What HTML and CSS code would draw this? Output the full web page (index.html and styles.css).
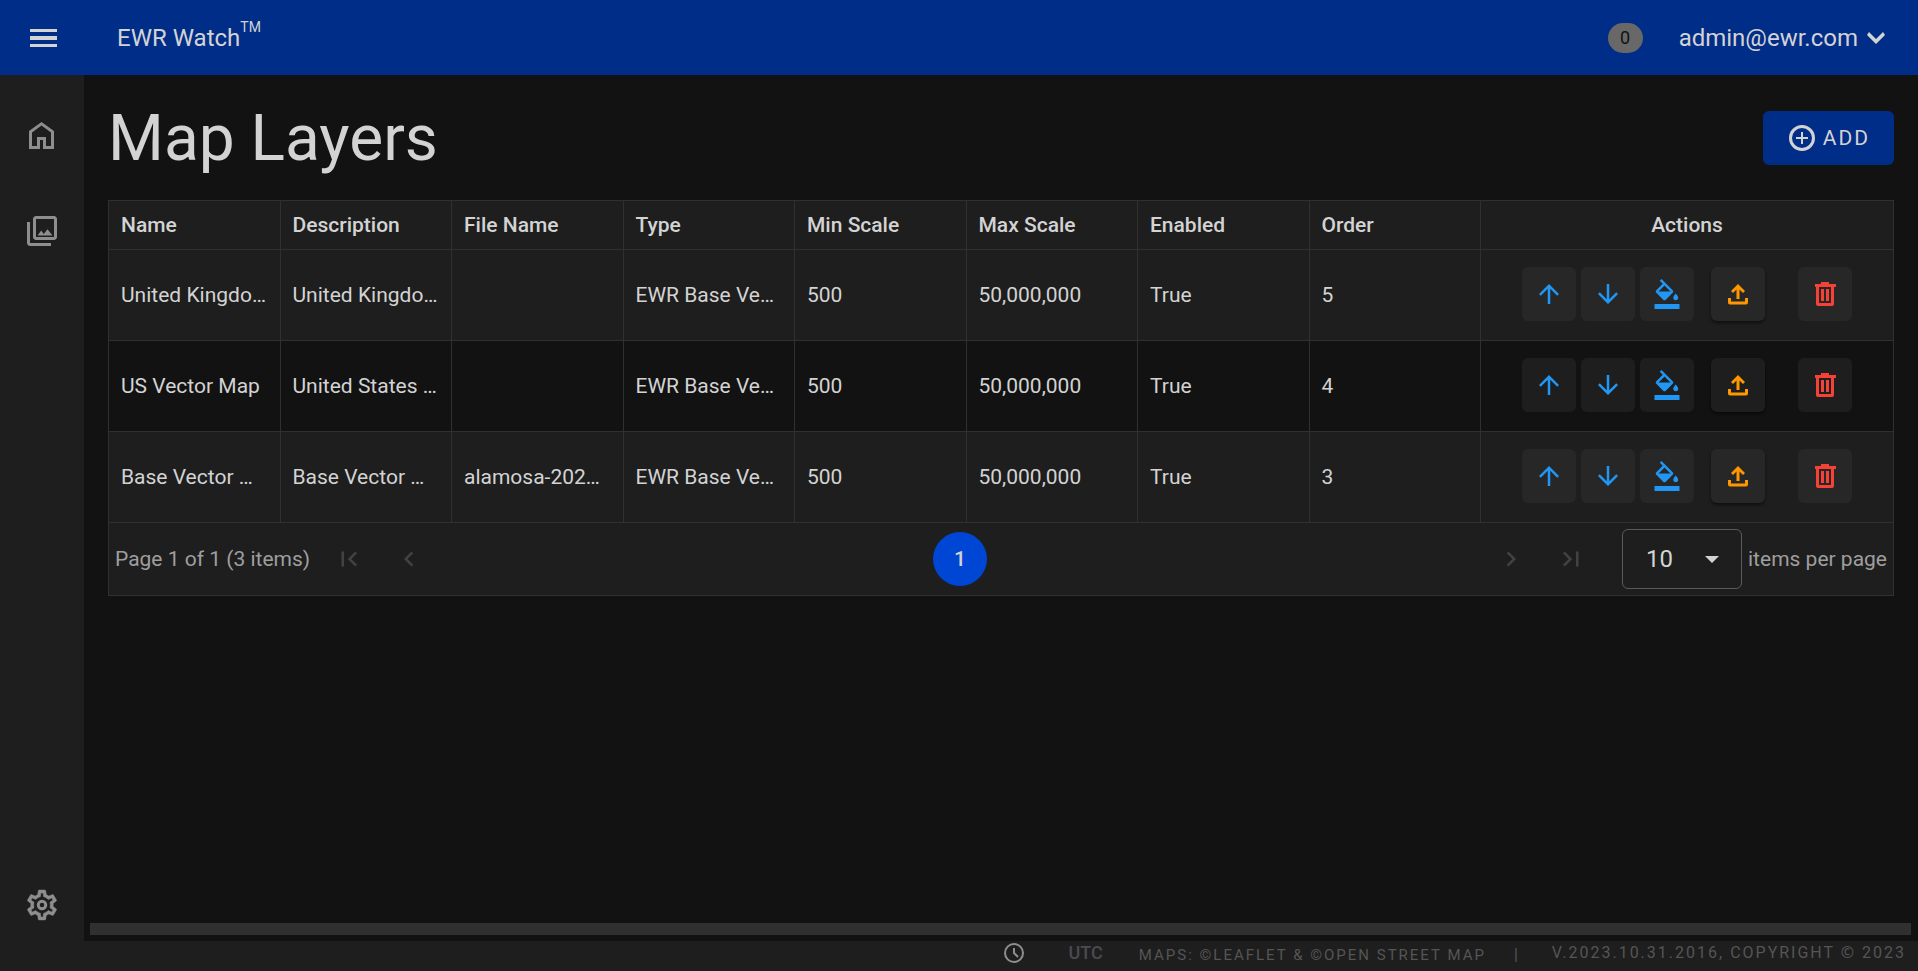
FILE: index.html
```html
<!DOCTYPE html>
<html lang="en">
<head>
    <meta charset="UTF-8">
    <meta name="viewport" content="width=device-width, initial-scale=1.0">
    <title>EWR Watch - Map Layers</title>
    <link rel="stylesheet" href="styles.css">
</head>
<body>
    <svg class="sprite" aria-hidden="true">
        <symbol id="i-up" viewBox="0 0 24 24"><path d="M4 12l1.41 1.41L11 7.83V20h2V7.83l5.58 5.59L20 12l-8-8-8 8z"/></symbol>
        <symbol id="i-down" viewBox="0 0 24 24"><path d="M20 12l-1.41-1.41L13 16.17V4h-2v12.17l-5.58-5.59L4 12l8 8 8-8z"/></symbol>
        <symbol id="i-fill" viewBox="0 0 24 24"><path d="M16.56 8.94L7.62 0 6.21 1.41l2.38 2.38-5.15 5.15c-.59.59-.59 1.54 0 2.12l5.5 5.5c.29.29.68.44 1.06.44s.77-.15 1.06-.44l5.5-5.5c.59-.58.59-1.53 0-2.12zM5.21 10L10 5.21 14.79 10H5.21zM19 11.5s-2 2.17-2 3.5c0 1.1.9 2 2 2s2-.9 2-2c0-1.33-2-3.5-2-3.5zM2 20h20v4H2v-4z"/></symbol>
        <symbol id="i-upload" viewBox="0 0 30 30"><path d="M15 5l7 7-2 2-3.500-3.500V20h-3v-9.500L10 14l-2-2zM5 19h3v3.500h14V19h3v4.500a2 2 0 0 1-2 2H7a2 2 0 0 1-2-2z"/></symbol>
        <symbol id="i-trash" viewBox="0 0 21 24"><path fill-rule="evenodd" d="M6 2V0h8v2h7v3h-2v17a2 2 0 0 1-2 2H3a2 2 0 0 1-2-2V5H0V2zM4 5v16h12V5zM6 7h3v12H6zM11 7h3v12h-3z"/></symbol>
        <symbol id="i-chev" viewBox="0 0 24 24"><path d="M10 6L8.590 7.410 13.170 12l-4.580 4.590L10 18l6-6z"/></symbol>
        <symbol id="i-last" viewBox="0 0 24 24"><path d="M5.590 7.410L10.180 12l-4.590 4.590L7 18l6-6-6-6zM16 6h2v12h-2z"/></symbol>
    </svg>

    <header class="topbar">
        <button class="plain menu" aria-label="Menu">
            <svg viewBox="0 0 27 18"><path d="M0 0h27v3H0zM0 7h27v4H0zM0 15h27v3H0z"/></svg>
        </button>
        <a class="brand" href="#">EWR Watch<sup>TM</sup></a>
        <span class="count">0</span>
        <button class="plain account">
            admin@ewr.com
            <svg viewBox="0 0 18 12"><path d="M2 0l7 7 7-7 2 3-9 9-9-9z"/></svg>
        </button>
    </header>

    <nav class="sidebar">
        <a href="#" aria-label="Home">
            <svg viewBox="-5 -5 36 36"><path fill-rule="evenodd" d="M12.500 0L25 9v18H14v-9h-3v9H0V9zM12.500 3.500L3 10.500V24h5v-9h9v9h5V10.500z"/></svg>
        </a>
        <a href="#" aria-label="Map layers">
            <svg viewBox="0 0 24 24"><path d="M20 4v12H8V4h12m0-2H8c-1.100 0-2 .9-2 2v12c0 1.100.9 2 2 2h12c1.100 0 2-.9 2-2V4c0-1.100-.9-2-2-2zm-8.500 9.670l1.690 2.260 2.480-3.100L19 15H9zM2 6v14c0 1.100.9 2 2 2h14v-2H4V6H2z"/></svg>
        </a>
        <a class="settings" href="#" aria-label="Settings">
            <svg viewBox="0 0 24 24"><path stroke="currentColor" stroke-width=".3" d="M19.430 12.980c.04-.32.07-.64.07-.98 0-.34-.03-.66-.07-.98l2.110-1.650c.19-.15.24-.42.12-.64l-2-3.460c-.09-.16-.26-.25-.44-.25-.06 0-.12.010-.17.030l-2.490 1c-.52-.4-1.080-.73-1.690-.98l-.38-2.650C14.460 2.180 14.250 2 14 2h-4c-.25 0-.46.18-.49.42l-.38 2.650c-.61.25-1.170.59-1.690.98l-2.490-1c-.06-.02-.12-.03-.18-.03-.17 0-.34.09-.43.25l-2 3.460c-.13.22-.07.49.12.64l2.110 1.650c-.04.32-.07.65-.07.98 0 .33.030.66.070.98l-2.110 1.650c-.19.15-.24.42-.12.64l2 3.460c.09.16.26.25.44.25.06 0 .12-.01.17-.03l2.490-1c.52.4 1.080.73 1.690.98l.38 2.650c.03.24.24.42.49.42h4c.25 0 .46-.18.49-.42l.38-2.650c.61-.25 1.170-.59 1.690-.98l2.490 1c.06.020.12.030.18.030.17 0 .34-.09.43-.25l2-3.460c.12-.22.07-.49-.12-.64l-2.110-1.650zm-1.980-1.710c.04.31.05.52.05.73 0 .21-.02.43-.05.73l-.14 1.130.89.7 1.080.84-.7 1.210-1.270-.51-1.040-.42-.9.68c-.43.32-.84.56-1.250.73l-1.060.43-.16 1.130-.2 1.350h-1.400l-.19-1.350-.16-1.130-1.060-.43c-.43-.18-.83-.41-1.230-.71l-.91-.7-1.060.43-1.270.51-.7-1.210 1.080-.84.89-.7-.14-1.130c-.03-.31-.05-.54-.05-.74s.02-.43.05-.73l.14-1.130-.89-.7-1.080-.84.7-1.210 1.270.51 1.040.42.9-.68c.43-.32.84-.56 1.250-.73l1.060-.43.16-1.130.2-1.350h1.390l.19 1.350.16 1.130 1.060.43c.43.18.83.41 1.230.71l.91.7 1.060-.43 1.270-.51.7 1.210-1.070.85-.89.7.14 1.130z"/><circle cx="12" cy="12" r="2.500" fill="none" stroke="currentColor" stroke-width="2"/></svg>
        </a>
    </nav>

    <main class="content">
        <div class="page-head">
            <h1>Map Layers</h1>
            <button class="add">
                <svg viewBox="0 0 26 26"><circle cx="13" cy="13" r="11.500" fill="none" stroke="currentColor" stroke-width="3"/><path d="M12 7h2v5h5v2h-5v5h-2v-5H7v-2h5z"/></svg>
                ADD
            </button>
        </div>

        <div class="grid">
            <table>
                <colgroup><col span="8"><col class="col-actions"></colgroup>
                <thead>
                    <tr><th>Name</th><th>Description</th><th>File Name</th><th>Type</th><th>Min Scale</th><th>Max Scale</th><th>Enabled</th><th>Order</th><th class="center">Actions</th></tr>
                </thead>
                <tbody>
                    <tr>
                        <td>United Kingdom Map</td><td>United Kingdom Map</td><td></td><td>EWR Base Vector</td><td>500</td><td>50,000,000</td><td>True</td><td>5</td>
                        <td class="cell-actions">
                            <div class="actions">
                                <button class="act" aria-label="Move up"><svg><use href="#i-up"/></svg></button>
                                <button class="act" aria-label="Move down"><svg><use href="#i-down"/></svg></button>
                                <button class="act fill" aria-label="Style"><svg><use href="#i-fill"/></svg></button>
                                <button class="act upload" aria-label="Upload"><svg><use href="#i-upload"/></svg></button>
                                <button class="act delete" aria-label="Delete"><svg><use href="#i-trash"/></svg></button>
                            </div>
                        </td>
                    </tr>
                    <tr>
                        <td>US Vector Map</td><td>United States Map</td><td></td><td>EWR Base Vector</td><td>500</td><td>50,000,000</td><td>True</td><td>4</td>
                        <td class="cell-actions">
                            <div class="actions">
                                <button class="act" aria-label="Move up"><svg><use href="#i-up"/></svg></button>
                                <button class="act" aria-label="Move down"><svg><use href="#i-down"/></svg></button>
                                <button class="act fill" aria-label="Style"><svg><use href="#i-fill"/></svg></button>
                                <button class="act upload" aria-label="Upload"><svg><use href="#i-upload"/></svg></button>
                                <button class="act delete" aria-label="Delete"><svg><use href="#i-trash"/></svg></button>
                            </div>
                        </td>
                    </tr>
                    <tr>
                        <td>Base Vector Map</td><td>Base Vector Map</td><td>alamosa-2023.map</td><td>EWR Base Vector</td><td>500</td><td>50,000,000</td><td>True</td><td>3</td>
                        <td class="cell-actions">
                            <div class="actions">
                                <button class="act" aria-label="Move up"><svg><use href="#i-up"/></svg></button>
                                <button class="act" aria-label="Move down"><svg><use href="#i-down"/></svg></button>
                                <button class="act fill" aria-label="Style"><svg><use href="#i-fill"/></svg></button>
                                <button class="act upload" aria-label="Upload"><svg><use href="#i-upload"/></svg></button>
                                <button class="act delete" aria-label="Delete"><svg><use href="#i-trash"/></svg></button>
                            </div>
                        </td>
                    </tr>
                </tbody>
            </table>

            <div class="pager">
                <span class="info">Page 1 of 1 (3 items)</span>
                <button class="plain nav flip" disabled aria-label="First page"><svg><use href="#i-last"/></svg></button>
                <button class="plain nav flip" disabled aria-label="Previous page"><svg><use href="#i-chev"/></svg></button>
                <div class="numbers"><button class="page">1</button></div>
                <button class="plain nav" disabled aria-label="Next page"><svg><use href="#i-chev"/></svg></button>
                <button class="plain nav" disabled aria-label="Last page"><svg><use href="#i-last"/></svg></button>
                <div class="select">
                    <select id="size"><option>10</option><option>20</option><option>50</option></select>
                    <svg viewBox="0 0 14 7"><path d="M0 0h14L7 7z"/></svg>
                </div>
                <label for="size">items per page</label>
            </div>
        </div>

        <div class="scroller"></div>
    </main>

    <footer class="footer">
        <svg viewBox="0 0 22 22"><g fill="none" stroke="currentColor" stroke-width="2"><circle cx="11" cy="11" r="9"/><path d="M11 6v5l4 4"/></g></svg>
        <span class="utc">UTC</span>
        <span class="maps">Maps: <a href="#">©Leaflet</a> &amp; <a href="#">©Open Street Map</a></span>
        <span class="sep">|</span>
        <span class="version">V.2023.10.31.2016, Copyright <span class="copy">©</span> 2023</span>
    </footer>
</body>
</html>
```
FILE: styles.css
```css
* {
    box-sizing: border-box;
}
body {
    margin: 0;
    height: 100vh;
    display: grid;
    grid-template: 75px 1fr 30px / 84px 1fr;
    background: #121212;
    color: #d3d3d3;
    font-family: Roboto, sans-serif;
    font-size: 21px;
    line-height: 30px;
}
svg {
    display: block;
    fill: currentColor;
}
a {
    color: inherit;
    text-decoration: none;
}
button {
    font: inherit;
    color: inherit;
    border: 0;
    padding: 0;
}
.sprite {
    position: absolute;
    width: 0;
    height: 0;
}
.plain {
    background: none;
}

/* top bar */
.topbar {
    grid-column: 1 / 3;
    display: flex;
    align-items: center;
    padding: 0 33px 0 30px;
    background: #002d88;
    font-size: 24px;
}
.menu svg {
    width: 27px;
    height: 18px;
}
.brand {
    margin-left: 60px;
    margin-right: auto;
}
.brand sup {
    font-size: 14px;
    line-height: 0;
    vertical-align: 14px;
}
.count {
    width: 35px;
    height: 30px;
    border-radius: 15px;
    background: #686868;
    color: #121212;
    font-size: 18px;
    text-align: center;
}
.account {
    display: flex;
    align-items: center;
    gap: 9px;
    margin-left: 36px;
}
.account svg {
    width: 18px;
    height: 12px;
}

/* sidebar */
.sidebar {
    display: flex;
    flex-direction: column;
    align-items: center;
    gap: 60px;
    padding: 42px 0 18px;
    background: #1e1e1e;
    color: #8e8e8e;
}
.sidebar svg {
    width: 36px;
    height: 36px;
}
.settings {
    margin-top: auto;
}

/* page */
.content {
    display: flex;
    flex-direction: column;
    min-width: 0;
    padding: 24px 7px 6px 6px;
}
.page-head {
    display: flex;
    align-items: center;
    justify-content: space-between;
    height: 78px;
    margin: 0 17px 23px 18px;
}
h1 {
    margin: 0;
    padding-top: 2px;
    font-size: 64px;
    line-height: 78px;
    font-weight: 400;
}
.add {
    display: flex;
    align-items: center;
    gap: 8px;
    height: 54px;
    padding: 0 24px 0 26px;
    border-radius: 6px;
    background: #002d88;
    letter-spacing: 2px;
}
.add svg {
    width: 26px;
    height: 26px;
}

.grid {
    margin: 0 17px 0 18px;
    border: 1px solid #303030;
    background: #1e1e1e;
}
table {
    width: 100%;
    table-layout: fixed;
    border-collapse: separate;
    border-spacing: 0;
}
.col-actions {
    width: 412px;
}
th,
td {
    padding: 0 12px;
    border-bottom: 1px solid #303030;
    border-right: 1px solid #303030;
    text-align: left;
    white-space: nowrap;
    overflow: hidden;
    text-overflow: ellipsis;
}
th:last-child,
td:last-child {
    border-right: 0;
}
th {
    height: 49px;
    font-weight: 500;
}
td {
    height: 91px;
}
th.center {
    text-align: center;
}
tbody tr:nth-child(even) {
    background: #121212;
}
.actions {
    display: flex;
    justify-content: center;
    gap: 5px;
    padding-bottom: 2px;
}
.act {
    display: grid;
    place-items: center;
    width: 54px;
    height: 54px;
    border-radius: 6px;
    background: #272727;
    color: #2196f3;
}
tr:nth-child(even) .act {
    background: #1e1e1e;
}
.act svg {
    width: 30px;
    height: 30px;
}
.act.upload {
    margin-left: 12px;
    color: #ff9800;
    box-shadow: 0 2px 3px rgba(0, 0, 0, 0.5);
}
.act.delete {
    margin-left: 28px;
    color: #f44336;
}
.act.delete svg {
    width: 21px;
    height: 24px;
}

/* pager */
.pager {
    display: flex;
    align-items: center;
    height: 72px;
    padding: 0 6px;
    color: #9e9e9e;
}
.info {
    margin-right: 9px;
}
.nav {
    display: grid;
    place-items: center;
    width: 60px;
    height: 54px;
    color: #424242;
}
.nav svg {
    width: 30px;
    height: 30px;
}
.flip svg {
    transform: rotate(180deg);
}
.numbers {
    flex: 1;
    display: flex;
    justify-content: center;
}
.page {
    width: 54px;
    height: 54px;
    border-radius: 50%;
    background: #0046d5;
    color: #d3d3d3;
    font-weight: 500;
}
.select {
    position: relative;
    margin: 0 6px 0 21px;
}
.select select {
    display: block;
    width: 120px;
    height: 60px;
    padding: 0 23px;
    appearance: none;
    border: 1px solid #5a5a5a;
    border-radius: 6px;
    background: #1e1e1e;
    color: #d3d3d3;
    font: inherit;
    font-size: 24px;
}
.select svg {
    position: absolute;
    right: 23px;
    top: 27px;
    width: 14px;
    height: 7px;
    color: #d3d3d3;
    pointer-events: none;
}
.scroller {
    height: 12px;
    margin-top: auto;
    background: #303030;
}

/* footer */
.footer {
    grid-column: 1 / 3;
    display: flex;
    align-items: center;
    justify-content: flex-end;
    padding: 0 12px 6px 0;
    background: #1e1e1e;
    color: #555;
    font-size: 16px;
    line-height: 24px;
    letter-spacing: 2px;
    text-transform: uppercase;
}
.footer svg {
    width: 22px;
    height: 22px;
    color: #8e8e8e;
}
.utc {
    margin: 0 36px 0 44px;
    color: #4a4a50;
    font-size: 18px;
    font-weight: 500;
    letter-spacing: 0;
}
.maps {
    padding-top: 3px;
    font-size: 15px;
}
.sep {
    margin: 0 32px 0 28px;
    padding-top: 3px;
}
.copy {
    font-family: "Noto Sans", sans-serif;
    line-height: 0;
}
```
